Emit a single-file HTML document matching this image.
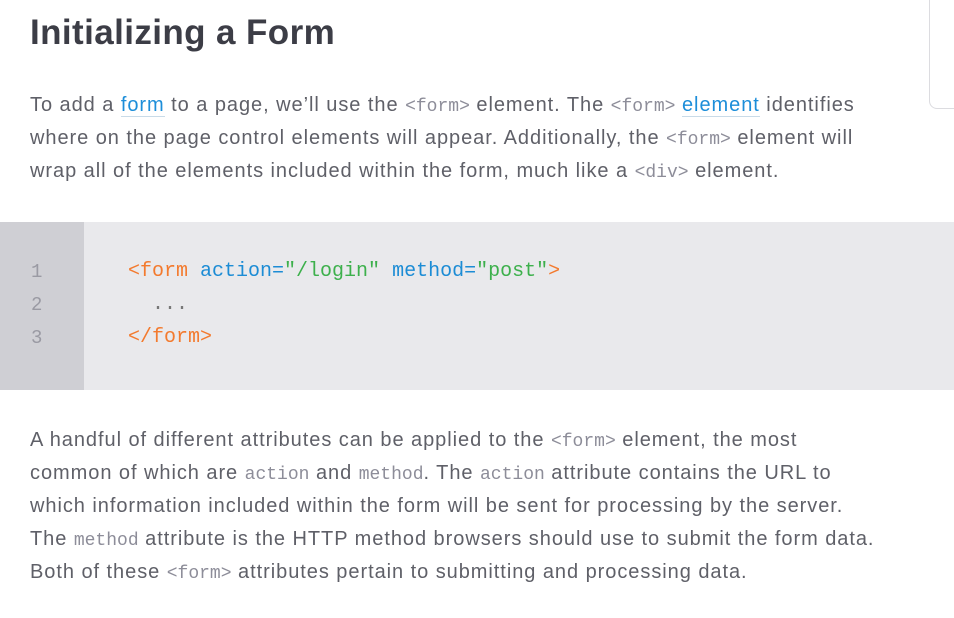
<!DOCTYPE html>
<html><head><meta charset="utf-8"><style>
body{margin:0;background:#fff;width:954px;height:618px;overflow:hidden;position:relative;font-family:"Liberation Sans",sans-serif;}
h1{position:absolute;left:30px;top:13px;margin:0;font-size:35px;font-weight:bold;color:#3c3d46;white-space:nowrap;letter-spacing:0.4px;}
.p{position:absolute;left:30px;font-size:20px;color:#5f6068;line-height:33px;white-space:nowrap;letter-spacing:0.95px;}
.p div{height:33px}
code{font-family:"Liberation Mono",monospace;font-size:18px;color:#8d8d99;letter-spacing:0;}
a{color:#1d8ed9;text-decoration:none;border-bottom:1px solid #c9dbe8;}
.box{position:absolute;right:-10px;top:-10px;width:33px;height:117px;border:1px solid #dcdce0;border-radius:8px;}
.code{position:absolute;left:0;top:222px;width:954px;height:168px;background:#e9e9ec;}
.gut{position:absolute;left:0;top:0;width:84px;height:168px;background:#cfcfd4;}
.ln{position:absolute;left:31px;font-family:"Liberation Mono",monospace;font-size:19px;color:#9a9aa3;}
.cl{position:absolute;left:128px;font-family:"Liberation Mono",monospace;font-size:20px;white-space:pre;}
.o{color:#f37a2e}.b{color:#1c8cd5}.g{color:#3db04c}.d{color:#777}
</style></head><body>
<div class="box"></div>
<h1>Initializing a Form</h1>
<div class="p" style="top:89px">
<div>To add a <a>form</a> to a page, we’ll use the <code>&lt;form&gt;</code> element. The <code>&lt;form&gt;</code> <a>element</a> identifies</div>
<div>where on the page control elements will appear. Additionally, the <code>&lt;form&gt;</code> element will</div>
<div>wrap all of the elements included within the form, much like a <code>&lt;div&gt;</code> element.</div>
</div>
<div class="code"><div class="gut"></div>
<div class="ln" style="top:39px">1</div><div class="ln" style="top:72px">2</div><div class="ln" style="top:105px">3</div>
<div class="cl" style="top:38px"><span class="o">&lt;form</span> <span class="b">action=</span><span class="g">"/login"</span> <span class="b">method=</span><span class="g">"post"</span><span class="o">&gt;</span></div>
<div class="cl" style="top:71px"><span class="d">  ...</span></div>
<div class="cl" style="top:104px"><span class="o">&lt;/form&gt;</span></div>
</div>
<div class="p" style="top:424px">
<div>A handful of different attributes can be applied to the <code>&lt;form&gt;</code> element, the most</div>
<div>common of which are <code>action</code> and <code>method</code>. The <code>action</code> attribute contains the URL to</div>
<div>which information included within the form will be sent for processing by the server.</div>
<div>The <code>method</code> attribute is the HTTP method browsers should use to submit the form data.</div>
<div>Both of these <code>&lt;form&gt;</code> attributes pertain to submitting and processing data.</div>
</div>
</body></html>
